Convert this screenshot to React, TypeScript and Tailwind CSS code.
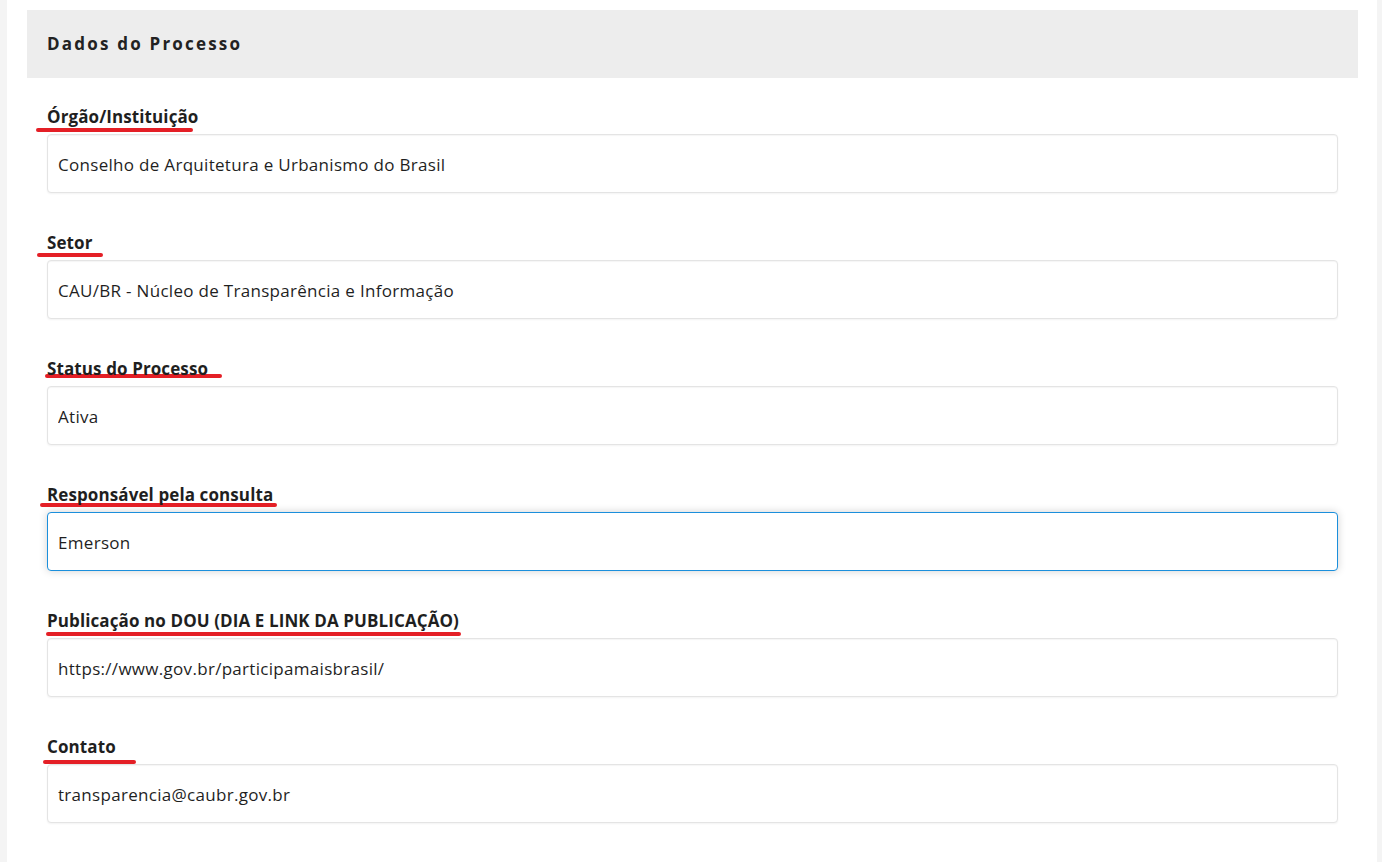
import React from 'react';

type Field = {
  label: string;
  value: string;
  focused?: boolean;
  mark: { left: number; top: number; width: number };
};

const FIELDS: Field[] = [
  { label: 'Órgão/Instituição', value: 'Conselho de Arquitetura e Urbanismo do Brasil', mark: { left: -11, top: 21, width: 157 } },
  { label: 'Setor', value: 'CAU/BR - Núcleo de Transparência e Informação', mark: { left: -10, top: 20, width: 66 } },
  { label: 'Status do Processo', value: 'Ativa', mark: { left: -2, top: 15, width: 177 } },
  { label: 'Responsável pela consulta', value: 'Emerson', focused: true, mark: { left: -7, top: 18, width: 237 } },
  { label: 'Publicação no DOU (DIA E LINK DA PUBLICAÇÃO)', value: 'https://www.gov.br/participamaisbrasil/', mark: { left: -1, top: 21, width: 415 } },
  { label: 'Contato', value: 'transparencia@caubr.gov.br', mark: { left: -4, top: 23, width: 93 } },
];

const App: React.FC = () => {
  return (
    <div className="min-h-screen bg-[#f4f4f4] pl-[7px] pr-[5px] font-['Open_Sans',sans-serif] text-[#1f1f1f]">
      <div className="min-h-[862px] bg-white pl-[20px] pr-[19px] pt-[10px]">
        {/* --- Header --- */}
        <div className="flex h-[68px] items-center bg-[#ededed] pl-[20px]">
          <h2 className="text-[17px] font-bold tracking-[2.2px] text-[#222]">Dados do Processo</h2>
        </div>

        <form className="flex flex-col gap-[40px] px-[20px] pt-[29px]">
          {FIELDS.map((f) => (
            <div key={f.label} className="flex flex-col gap-[3px]">
              <label className="relative block h-[24px] text-[17px] font-bold leading-[20px] tracking-[0.1px] text-[#1f1f1f]">
                <span className="relative z-10">{f.label}</span>
                <span
                  className="absolute h-[4px] rounded-full bg-[#e41f26]"
                  style={{ left: f.mark.left, top: f.mark.top, width: f.mark.width }}
                />
              </label>
              <input
                readOnly
                value={f.value}
                className={
                  f.focused
                    ? 'h-[59px] w-full rounded-[4px] border border-[#1b8fdc] bg-white px-[10px] pt-[2px] text-[17px] tracking-[0.3px] text-[#1f1f1f] shadow-[0_0_8px_rgba(0,0,0,0.18)] outline-none'
                    : 'h-[59px] w-full rounded-[4px] border border-[#e4e4e4] bg-white px-[10px] pt-[2px] text-[17px] tracking-[0.3px] text-[#1f1f1f] shadow-[inset_0_1px_1px_rgba(0,0,0,0.04),0_1px_2px_rgba(0,0,0,0.05)] outline-none'
                }
              />
            </div>
          ))}
        </form>
      </div>
    </div>
  );
};

export default App;
